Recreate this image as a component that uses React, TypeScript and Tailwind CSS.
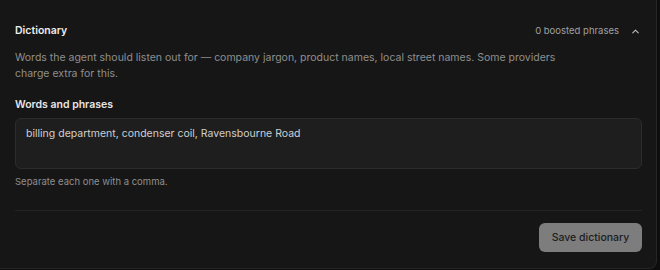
import { ChevronUp } from 'lucide-react';

export default function App() {
  return (
    <div className="w-[660px] h-[270px] bg-[#0d0d0d] overflow-hidden" style={{ fontFamily: 'Inter, "Noto Sans", sans-serif' }}>
      <div className="w-[657px] h-[269px] bg-[#161616] border-r border-b border-[#262626] rounded-br-[8px] pl-[15px] pr-[14px] pt-[23px] flex flex-col">
        <div className="flex items-center justify-between h-[16px]">
          <h2 className="text-[10.5px] font-semibold text-[#ececec]">Dictionary</h2>
          <div className="flex items-center gap-[11px] pr-[1px]">
            <span className="text-[9.5px] text-[#a0a0a0]">0 boosted phrases</span>
            <ChevronUp size={11} strokeWidth={2.2} className="text-[#c4c4c4]" />
          </div>
        </div>
        <p className="mt-[11px] max-w-[560px] text-[10.5px] leading-[16px] text-[#8f8f8f]">
          Words the agent should listen out for — company jargon, product names, local street names. Some providers
          charge extra for this.
        </p>
        <label className="mt-[15px] text-[10.5px] font-semibold text-[#e6e6e6] leading-[16px]">Words and phrases</label>
        <div className="mt-[5px] h-[51px] rounded-[6px] border border-[#2c2c2c] bg-[#1e1e1e] px-[10px] pt-[7px] text-[10.5px] leading-[16px] text-[#cfcfcf]">
          billing department, condenser coil, Ravensbourne Road
        </div>
        <p className="mt-[6px] text-[9.5px] leading-[14px] text-[#8f8f8f]">Separate each one with a comma.</p>
        <div className="mt-[21px] border-t border-[#242424]" />
        <div className="mt-[12px] flex justify-end">
          <button className="h-[29px] w-[103px] rounded-[6px] bg-[#7d7d7d] text-[10.5px] font-medium text-[#1c1c1c]">
            Save dictionary
          </button>
        </div>
      </div>
    </div>
  );
}
